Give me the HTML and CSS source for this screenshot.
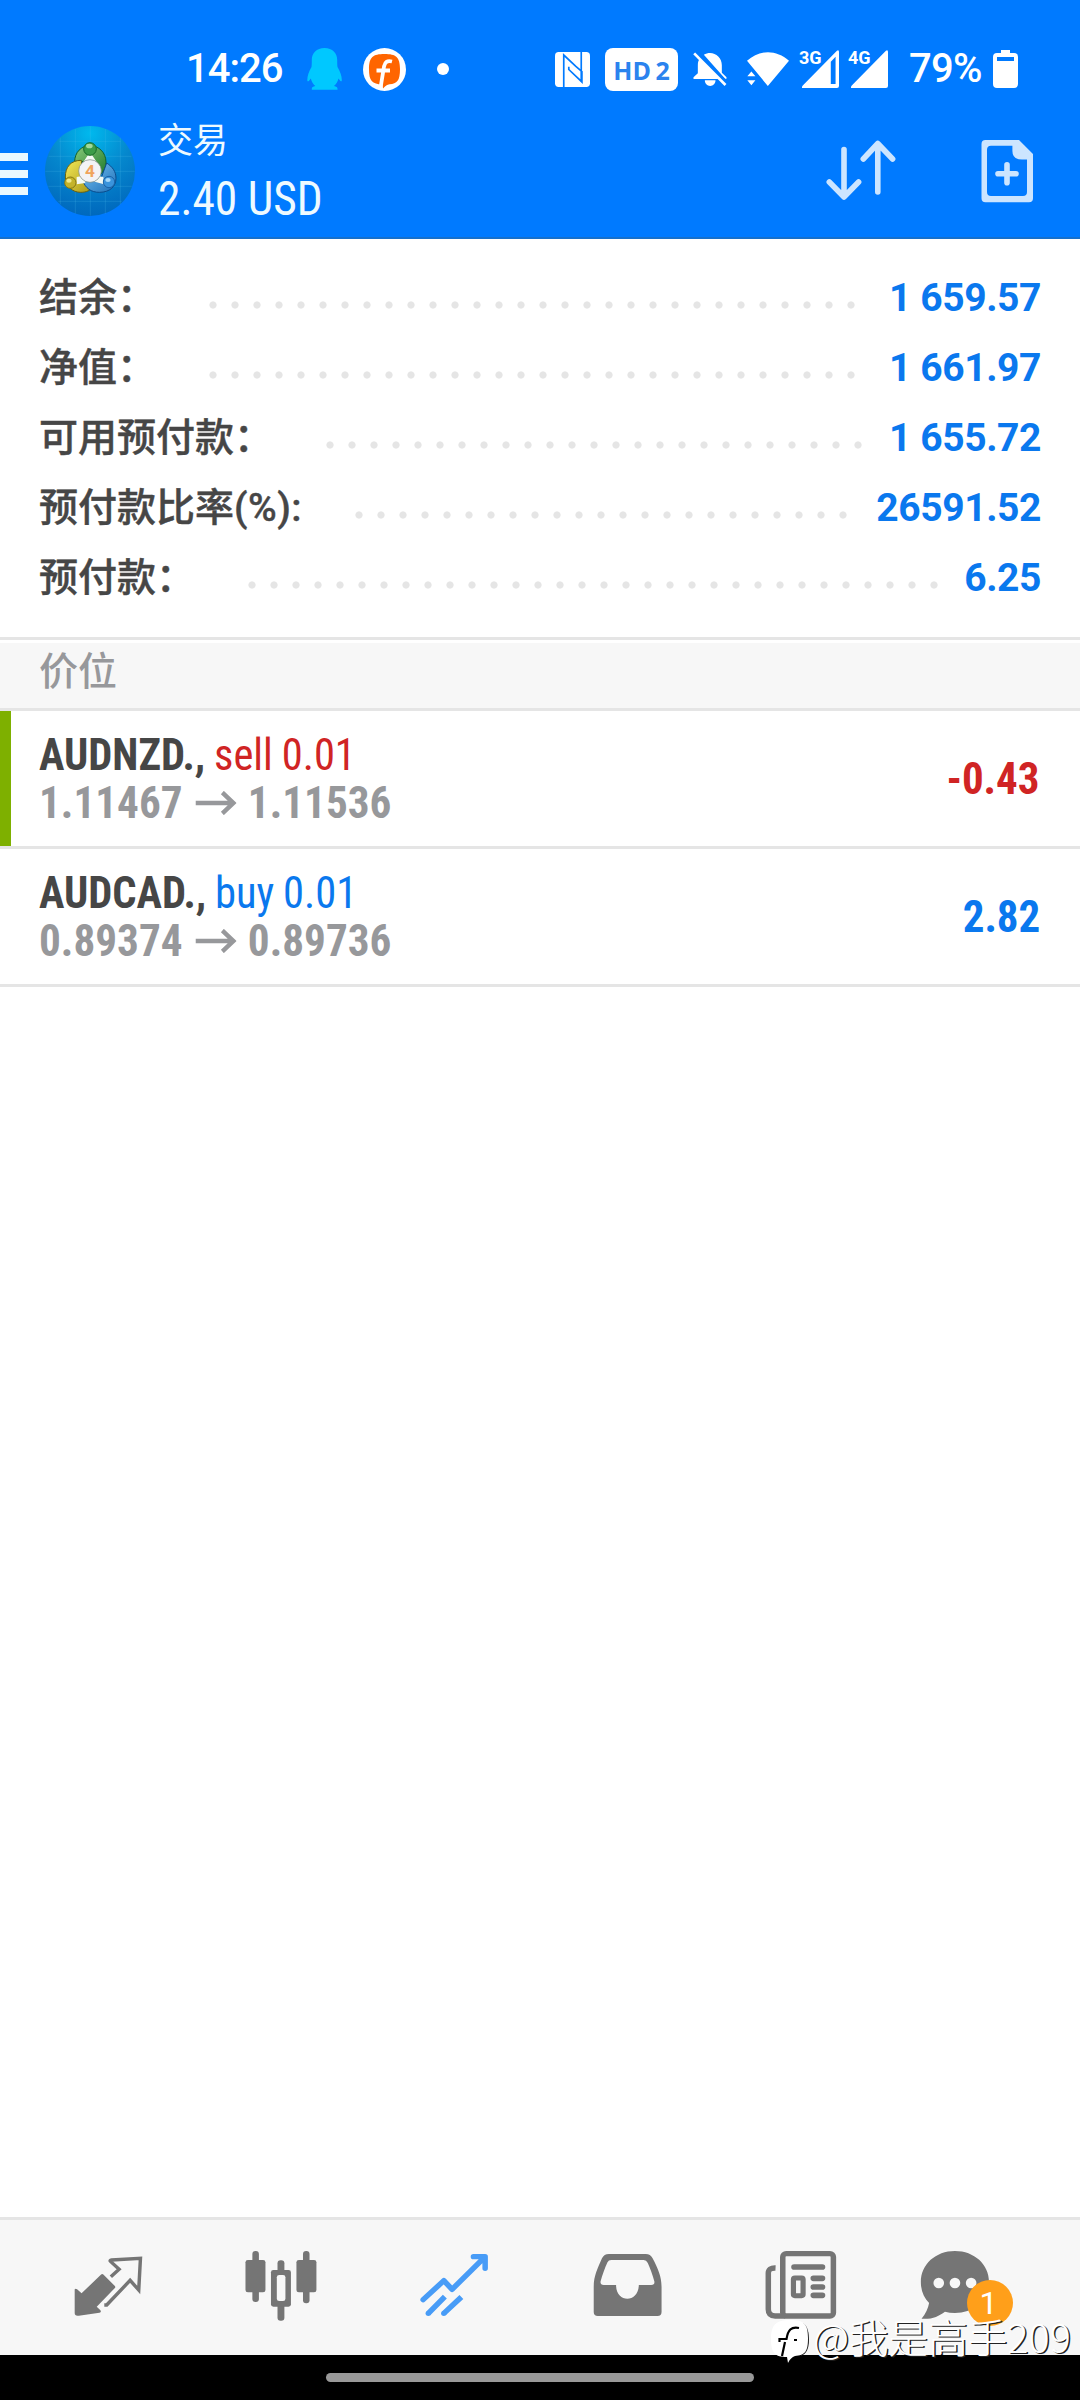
FILE: index.html
```html
<!DOCTYPE html>
<html lang="zh-CN">
<head>
<meta charset="utf-8">
<title>交易</title>
<link rel="stylesheet" href="styles.css">
</head>
<body>
<header class="header">
  <div class="status">
    <span class="status-text clock">14:26</span>
    <svg class="qq" viewBox="0 0 35 42"><path fill="#00c8ff" d="M17.500 0C9.500 0 4.800 5 4.800 12c0 3 0 5-.3 7C2 23 .3 28 .3 32c0 2.200 1.200 1.800 3.500-1.500.8 3 2.300 5.500 4.500 7.500-2.300.6-3.500 1.400-3.500 2.800v.9h25.700v-.9c0-1.400-1.200-2.200-3.500-2.800 2.200-2 3.700-4.500 4.500-7.500 2.300 3.300 3.300 3.700 3.300 1.500 0-4-1.800-9-4.300-13-.3-2-.3-4-.3-7C30.200 5 25.500 0 17.500 0z"/></svg>
    <svg class="fapp" viewBox="0 0 43 43"><circle cx="21.500" cy="21.500" r="21.500" fill="#fff"/><path fill="#ff6500" d="M21.500 6C33 6 37 9 37 21s-3 14.500-10.500 15.300c-2.500.4-4 1.500-6.500 4.200l-.6-4C9 36 6 33 6 21S10 6 21.500 6z"/><path fill="none" stroke="#fff" stroke-width="3.800" d="M29 13.500c-5-1.200-7 .5-8 5L17.500 40M13.500 22.500h13.500"/></svg>
    <i class="dot"></i>
    <svg class="nfc" viewBox="16 36 104 104"><rect x="16" y="36" width="104" height="104" rx="11" fill="#fff"/><path fill="none" stroke="#007aff" stroke-width="5" d="M42 140V45l36 34 18 15v31L57 88V80M94 36v89"/></svg>
    <span class="hd">HD 2</span>
    <svg class="bell" viewBox="430 38 101 102"><path fill="#fff" d="M450 58c-5 6-6 12-6 20v24l-13 12v5h76zM465 123h32c0 10-7 17-16 17s-16-7-16-17z"/><path fill="#fff" d="M462 46c24-14 54 2 54 32v22l14 14v4h-4z"/><path stroke="#007aff" stroke-width="8" d="M440 36l94 97"/><path stroke="#fff" stroke-width="8" d="M433 42l94 95"/></svg>
    <svg class="wifi" viewBox="591 38 125 101"><path fill="#fff" d="M591 64c38-34 87-34 125 0l-63 75zM592 110l12-14 12 14zM592 122h24l-12 15z"/></svg>
    <svg class="sig sig-a" viewBox="762 60 108 114" preserveAspectRatio="none"><path fill="#fff" fill-rule="evenodd" d="M762 174q-1-4 3-8L864 62q6-4 6 4v102q0 6-6 6zM846 95v67h14V80z"/></svg>
    <svg class="sig sig-b" viewBox="762 60 108 114" preserveAspectRatio="none"><path fill="#fff" d="M762 174q-1-4 3-8L864 62q6-4 6 4v102q0 6-6 6z"/></svg>
    <span class="net net-a">3G</span><span class="net net-b">4G</span>
    <span class="status-text pct">79%</span>
    <svg class="batt" viewBox="0 0 25 38"><path fill="#fff" fill-rule="evenodd" d="M8 0h9v3h4q4 0 4 4v27q0 4-4 4H4q-4 0-4-4V7q0-4 4-4h4zM4 7v4h17V7z"/></svg>
  </div>
  <div class="toolbar">
    <div class="menu"><i></i><i></i><i></i></div>
    <svg class="logo" viewBox="135 49 270 270">
      <defs>
        <radialGradient id="sky" cx=".5" cy="0.08" r=".92"><stop offset="0" stop-color="#00b9ee"/><stop offset=".5" stop-color="#0587cd"/><stop offset="1" stop-color="#0068bd"/></radialGradient>
        <linearGradient id="gr" x2="1" y2="1"><stop stop-color="#8bcb7b"/><stop offset="1" stop-color="#1f7a2b"/></linearGradient>
        <linearGradient id="ye" x2="1" y2="1"><stop stop-color="#f3e95a"/><stop offset="1" stop-color="#a89512"/></linearGradient>
        <linearGradient id="bl" x2="1" y2="1"><stop stop-color="#7cc6f5"/><stop offset="1" stop-color="#1c6fb8"/></linearGradient>
      </defs>
      <circle cx="270" cy="184" r="135" fill="url(#sky)"/>
      <path stroke="#5cc4f2" stroke-opacity=".3" stroke-width="2" d="M181 84v200M226 58v254M271 50v268M316 58v254M361 84v200M178 95h184M146 140h248M136 185h268M145 230h250M175 275h190"/>
      <g stroke-linejoin="round" stroke-width="3">
        <path fill="url(#gr)" stroke="#12602a" d="M224 156c0-28 20-48 46-48s48 20 48 50c0 18-8 30-20 38l-30-30-28-14z"/>
        <path fill="url(#ye)" stroke="#6b6210" d="M244 152c-32 0-48 20-48 50 0 28 22 46 46 46 18 0 30-6 38-18l-34-40z"/>
        <path fill="url(#bl)" stroke="#0c4c8c" d="M248 212c8 24 26 36 50 36 32 0 50-18 50-42 0-20-10-34-28-46l-16 44z"/>
      </g>
      <path fill="#f4faf4" d="M252 154l12-18h12l12 18zM230 202l20-4 6 22-26 4zM310 202l-20-4-6 18 28 8z"/>
      <circle cx="270" cy="118" r="19" fill="#3c9c48" stroke="#176a28" stroke-width="3"/><ellipse cx="268" cy="109" rx="10" ry="7" fill="#9fd89a"/>
      <circle cx="211" cy="219" r="17" fill="#c4b32a" stroke="#857612" stroke-width="3"/><ellipse cx="207" cy="213" rx="8" ry="6" fill="#f0e88a"/>
      <circle cx="327" cy="217" r="17" fill="#3a94dc" stroke="#1a62a6" stroke-width="3"/><ellipse cx="324" cy="211" rx="8" ry="6" fill="#a5d8fa"/>
      <circle cx="270" cy="184" r="34" fill="#f3f3f5" stroke="#77857a" stroke-width="2"/>
      <text x="270" y="203" text-anchor="middle" class="logo-four">4</text>
    </svg>
    <div class="titles"><div class="title">交易</div><div class="profit cond">2.40 USD</div></div>
    <svg class="sort" viewBox="826 140 70 61"><path fill="none" stroke="#cce5ff" stroke-width="5.600" stroke-linecap="round" stroke-linejoin="round" d="M844 149.500V196.500M829.300 182L844 197l14.600-15M877.800 192V144.500M863.300 159l14.500-15.500L892.600 159"/></svg>
    <svg class="newdoc" viewBox="981 140 52 63"><path fill="#cce5ff" fill-rule="evenodd" d="M985.500 140H1019l14 14v44.300q0 4-4 4h-43.500q-4 0-4-4V144q0-4 4-4zM991 145.700q-4 0-4 4V192q0 4 4 4h32q4 0 4-4v-32.500h-5q-9.600 0-9.600-8.500v-5.300z"/><path stroke="#cce5ff" stroke-width="5.600" stroke-linecap="round" d="M998 173.800h18M1007 164.800v18"/></svg>
  </div>
</header>
<section class="account">
  <div class="line"><span class="label">结余：</span><i class="leader" style="width:660px"></i><span class="amount">1 659.57</span></div>
  <div class="line"><span class="label">净值：</span><i class="leader" style="width:660px"></i><span class="amount">1 661.97</span></div>
  <div class="line"><span class="label">可用预付款：</span><i class="leader" style="width:550px"></i><span class="amount">1 655.72</span></div>
  <div class="line"><span class="label">预付款比率<span class="latin">(%):</span></span><i class="leader" style="width:506px"></i><span class="amount">26591.52</span></div>
  <div class="line"><span class="label">预付款：</span><i class="leader" style="width:704px"></i><span class="amount">6.25</span></div>
</section>
<h2 class="section">价位</h2>
<main class="positions">
  <article class="position active">
    <div><div class="cond row deal"><b>AUDNZD.,</b> <span class="sell">sell 0.01</span></div>
    <div class="cond row price"><span>1.11467</span><svg class="arrow" viewBox="0 0 43 24"><path fill="none" stroke="#97989b" stroke-width="4.500" d="M0 12h40M28 1.500L39.500 12 28 22.500"/></svg><span>1.11536</span></div></div>
    <span class="cond pnl sell">-0.43</span>
  </article>
  <article class="position">
    <div><div class="cond row deal"><b>AUDCAD.,</b> <span class="buy">buy 0.01</span></div>
    <div class="cond row price"><span>0.89374</span><svg class="arrow" viewBox="0 0 43 24"><path fill="none" stroke="#97989b" stroke-width="4.500" d="M0 12h40M28 1.500L39.500 12 28 22.500"/></svg><span>0.89736</span></div></div>
    <span class="cond pnl buy">2.82</span>
  </article>
</main>
<nav class="tabs">
  <svg viewBox="64 60 502.400 405" preserveAspectRatio="none"><path fill="#757575" d="M217 268q3-4 7 0l13 12 56-56q4-4 8 0l32 33q4 4 0 8l-52 55 10 10q5 6-2 8l-60 9q-12 2-12-8z"/><path fill="none" stroke="#757575" stroke-width="10" d="M322 230l24-22-25-24q-3-3 3-4l84-5-5 95-25-29-68 74h-7"/></svg>
  <svg viewBox="566.400 60 502.400 405" preserveAspectRatio="none"><g fill="#757575"><rect x="733" y="153" width="19" height="153" rx="9"/><rect x="713" y="180" width="58" height="97" rx="7"/><rect x="880" y="153" width="19" height="157" rx="9"/><rect x="861" y="180" width="58" height="97" rx="7"/><rect x="806" y="181" width="20" height="181" rx="9"/><rect x="787" y="210" width="58" height="110" rx="7"/></g><rect x="804" y="225" width="25" height="78" rx="7" fill="#f7f7f7"/></svg>
  <svg viewBox="1068.800 60 502.400 405" preserveAspectRatio="none"><path fill="none" stroke="#489cf7" stroke-width="16" stroke-linecap="round" stroke-linejoin="round" d="M1229 299l60-57 24 26 94-96M1375 170h34v35"/><path fill="#489cf7" d="M1385 165h28v30z"/><path fill="none" stroke="#489cf7" stroke-width="16" d="M1244 340l48-50M1289 340l51-49"/><circle cx="1244" cy="340" r="8" fill="#489cf7"/><circle cx="1289" cy="340" r="8" fill="#489cf7"/></svg>
  <svg viewBox="2.900 60 502.400 405" preserveAspectRatio="none"><path fill="#757575" fill-rule="evenodd" d="M200 162H307q14 0 20 13c16 32 26 55 26 85v76q0 12-12 12H168q-12 0-12-12v-76c0-32 11-54 24-85q6-13 20-13zM207 180q-8 0-11 7c-8 18-15 38-20 57q-2 10 9 11h36c-1 54 65 56 66 0h36q11 0 9-11c-5-19-12-39-19-55q-4-9-12-9z"/></svg>
  <svg viewBox="505.300 60 502.400 405" preserveAspectRatio="none"><g fill="none" stroke="#757575"><rect x="705" y="161" width="147" height="187" rx="10" stroke-width="16"/><path stroke-width="16" d="M684 204q-21-1-21 16v108q0 20 20 20h30"/><rect x="736" y="234" width="28" height="53" rx="4" stroke-width="15"/><path stroke-width="17" stroke-linecap="round" d="M738 201h82M794 235h26M794 261h26M794 286h26"/></g></svg>
  <div class="chat"><svg viewBox="1007.700 60 502.400 405" preserveAspectRatio="none"><path fill="#757575" d="M1205 153c56 0 99 40 99 93s-43 93-99 93q-16 0-29-4c-18 14-40 24-68 21q17-20 22-47c-15-15-24-36-24-63 0-53 43-93 99-93z"/><g fill="#f7f7f7"><circle cx="1158" cy="249" r="15.500"/><circle cx="1205" cy="249" r="15.500"/><circle cx="1252" cy="249" r="15.500"/></g></svg><span class="badge">1</span></div>
</nav>
<footer class="gesture"><i></i></footer>
<div class="watermark"><svg viewBox="0 0 38 43"><path fill="#222" d="M32 3c5 4 6 10 6 17 0 9-3 14-8 16z"/><path fill="#fff" d="M19 0c14 0 18 4 18 18s-3 17-13 18c-3 1-5 3-7 7l-1-6C4 37 0 33 0 19S5 0 19 0z"/><path fill="none" stroke="#000" stroke-width="2.200" d="M28 8c-8-1.500-11 2-12.500 11H8.500v3M14 22l-3 14M23 20h3"/></svg><span>@我是高手209</span></div>
</body>
</html>
```
FILE: styles.css
```css
* { box-sizing: border-box; }
body { margin: 0; width: 1080px; height: 2400px; display: flex; flex-direction: column; position: relative; overflow: hidden; background: #fff; font-family: Roboto, "Noto Sans CJK SC", sans-serif; color: #464646; }
svg { display: block; flex: none; }
.header { height: 239px; flex: none; background: #007aff; border-bottom: 2px solid #1670cb; }
.status { height: 110px; display: flex; align-items: center; padding: 28px 0 0 186px; position: relative; }
.status-text { font-size: 40px; line-height: 40px; font-weight: 500; color: #fff; white-space: nowrap; }
.clock { width: 121px; letter-spacing: -1px; }
.qq { width: 35px; height: 42px; }
.fapp { width: 43px; height: 43px; margin-left: 21px; }
.dot { width: 12px; height: 12px; border-radius: 50%; background: #fff; margin-left: 31px; }
.nfc { width: 35px; height: 35px; margin-left: 106px; }
.hd { width: 73px; height: 43px; margin-left: 15px; border-radius: 8px; background: #fff; color: #2b83ee; font: 700 25px/44px "Open Sans", sans-serif; text-align: center; word-spacing: -2px; white-space: nowrap; }
.bell { width: 34px; height: 34px; margin-left: 15px; }
.wifi { width: 42px; height: 34px; margin-left: 20px; }
.sig { width: 37px; height: 38px; margin-left: 13px; }
.sig-b { margin-left: 12px; }
.net { position: absolute; top: 48px; font-size: 18px; line-height: 20px; font-weight: 700; color: #fff; }
.net-a { left: 799px; }
.net-b { left: 848px; }
.pct { width: 84px; margin-left: 21px; letter-spacing: -0.7px; }
.batt { width: 25px; height: 38px; }
.toolbar { height: 127px; display: flex; align-items: flex-start; }
.menu { width: 28px; margin-top: 43px; display: flex; flex-direction: column; gap: 9px; }
.menu i { height: 8px; background: #e9f8ff; }
.logo { width: 90px; height: 90px; margin: 16px 0 0 17px; }
.logo-four { font: 700 52px Roboto, sans-serif; fill: #f0a45c; }
.titles { width: 668px; margin: 8px 0 0 23px; color: #eefaff; }
.title { font-size: 35px; line-height: 48px; }
.profit { font-size: 48px; line-height: 60px; margin-top: 3px; transform: scaleX(.946); transform-origin: 0 50%; }
.sort { width: 70px; height: 61px; margin-top: 30px; }
.newdoc { width: 52px; height: 63px; margin: 30px 0 0 85px; }
.cond { font-family: "Roboto Condensed", Roboto, sans-serif; font-stretch: 75%; white-space: nowrap; }
.account { height: 401px; flex: none; padding: 24px 39px 0 39px; border-bottom: 3px solid #e5e5e5; }
.line { height: 70px; display: flex; align-items: center; font-size: 39px; line-height: 70px; font-weight: 500; white-space: nowrap; }
.label { margin-right: 46px; -webkit-text-stroke: .4px currentColor; }
.latin { letter-spacing: .5px; }
.leader { height: 8px; margin-top: 14px; background: radial-gradient(circle at 11px 4px, #e5e5e5 3.200px, transparent 4px) 0 0 / 22px 8px repeat-x; }
.amount { margin-left: auto; font-weight: 700; letter-spacing: -.4px; color: #0a78ee; }
.section { margin: 3px 0 0; height: 68px; flex: none; padding-left: 39px; background: #f7f7f7; border-bottom: 3px solid #e5e5e5; font-size: 39px; line-height: 58px; font-weight: 500; color: #97989b; }
.positions { flex: 1; }
.position { height: 138px; padding: 20px 40px 0 39px; display: flex; justify-content: space-between; border-bottom: 3px solid #e5e5e5; font-size: 45px; }
.active { background: linear-gradient(#7eb000, #7eb000) 0 0 / 11px 100% no-repeat; }
.row { line-height: 48px; height: 48px; transform-origin: 0 50%; }
.deal { transform: scaleX(.945); word-spacing: -1px; }
.price { display: flex; align-items: center; color: #97989b; font-weight: 700; transform: scaleX(.96); }
.arrow { width: 43px; height: 24px; margin: 0 12px 0 13px; }
.pnl { font-weight: 700; line-height: 95px; transform: scaleX(.955); transform-origin: 100% 50%; }
.sell { color: #d02424; }
.buy { color: #0a78ee; }
.tabs { height: 138px; flex: none; display: flex; padding-left: 22px; background: #f7f7f7; border-top: 3px solid #e5e5e5; }
.tabs svg { width: 173px; height: 135px; }
.chat { position: relative; }
.badge { position: absolute; left: 80px; top: 60px; width: 46px; height: 46px; border-radius: 50%; background: #ff9f1a; color: #fff; font-size: 32px; line-height: 46px; text-align: center; padding-right: 3px; }
.gesture { height: 45px; flex: none; background: #000; display: flex; justify-content: center; padding-top: 18px; }
.gesture i { width: 428px; height: 9px; border-radius: 5px; background: #999; }
.watermark { position: absolute; left: 771px; top: 2320px; display: flex; gap: 4px; }
.watermark svg { width: 38px; height: 43px; }
.watermark span { font: 300 39.600px/32px "Noto Sans CJK SC", sans-serif; color: #fff; text-shadow: 1.500px 1px 0 #222; white-space: nowrap; }
```
